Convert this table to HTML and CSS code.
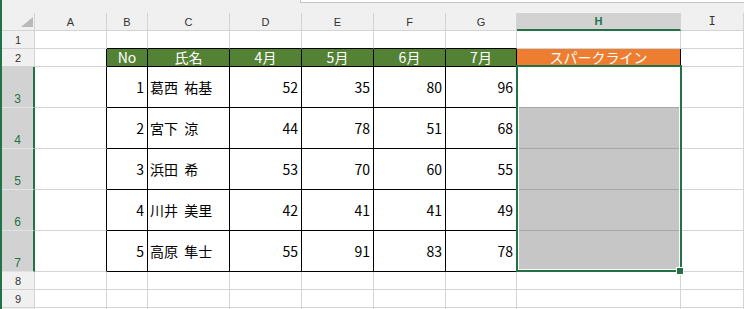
FILE: index.html
```html
<!DOCTYPE html>
<html lang="ja">
<head>
<meta charset="UTF-8">
<title>Book1 - Excel</title>
<link rel="stylesheet" href="styles.css">
</head>
<body>
<div class="screen">
    <div class="top-band"><div class="formula-box"></div></div>
    <div class="sheet">
        <!-- 列見出し -->
        <div class="corner">
            <svg width="12" height="10" viewBox="0 0 12 10"><polygon points="12,0 12,10 0,10" fill="#b9b9b9"/></svg>
        </div>
        <div class="col-head">A</div>
        <div class="col-head">B</div>
        <div class="col-head">C</div>
        <div class="col-head">D</div>
        <div class="col-head">E</div>
        <div class="col-head">F</div>
        <div class="col-head">G</div>
        <div class="col-head active">H</div>
        <div class="col-head serif">I</div>

        <!-- 1行目 -->
        <div class="row-head">1</div>
        <div class="cell"></div>
        <div class="cell line-b"></div>
        <div class="cell line-b"></div>
        <div class="cell line-b"></div>
        <div class="cell line-b"></div>
        <div class="cell line-b"></div>
        <div class="cell line-b"></div>
        <div class="cell"></div>
        <div class="cell"></div>

        <!-- 2行目 : 表の見出し -->
        <div class="row-head">2</div>
        <div class="cell line-r"></div>
        <div class="cell box head">No</div>
        <div class="cell box head">氏名</div>
        <div class="cell box head">4月</div>
        <div class="cell box head">5月</div>
        <div class="cell box head">6月</div>
        <div class="cell box head">7月</div>
        <div class="cell line-r spark">スパークライン</div>
        <div class="cell"></div>

        <!-- 3〜7行目 : データ -->
        <div class="row-head sel">3</div>
        <div class="cell line-r"></div>
        <div class="cell box num">1</div>
        <div class="cell box name">葛西 祐基</div>
        <div class="cell box num">52</div>
        <div class="cell box num">35</div>
        <div class="cell box num">80</div>
        <div class="cell box num">96</div>
        <div class="cell shade-b"></div>
        <div class="cell"></div>

        <div class="row-head sel">4</div>
        <div class="cell line-r"></div>
        <div class="cell box num">2</div>
        <div class="cell box name">宮下 涼</div>
        <div class="cell box num">44</div>
        <div class="cell box num">78</div>
        <div class="cell box num">51</div>
        <div class="cell box num">68</div>
        <div class="cell shade shade-b"></div>
        <div class="cell"></div>

        <div class="row-head sel">5</div>
        <div class="cell line-r"></div>
        <div class="cell box num">3</div>
        <div class="cell box name">浜田 希</div>
        <div class="cell box num">53</div>
        <div class="cell box num">70</div>
        <div class="cell box num">60</div>
        <div class="cell box num">55</div>
        <div class="cell shade shade-b"></div>
        <div class="cell"></div>

        <div class="row-head sel">6</div>
        <div class="cell line-r"></div>
        <div class="cell box num">4</div>
        <div class="cell box name">川井 美里</div>
        <div class="cell box num">42</div>
        <div class="cell box num">41</div>
        <div class="cell box num">41</div>
        <div class="cell box num">49</div>
        <div class="cell shade shade-b"></div>
        <div class="cell"></div>

        <div class="row-head sel">7</div>
        <div class="cell line-r"></div>
        <div class="cell box num">5</div>
        <div class="cell box name">高原 隼士</div>
        <div class="cell box num">55</div>
        <div class="cell box num">91</div>
        <div class="cell box num">83</div>
        <div class="cell box num">78</div>
        <div class="cell shade"></div>
        <div class="cell"></div>

        <!-- 8行目以降 -->
        <div class="row-head">8</div>
        <div class="cell"></div><div class="cell"></div><div class="cell"></div><div class="cell"></div>
        <div class="cell"></div><div class="cell"></div><div class="cell"></div><div class="cell"></div><div class="cell"></div>

        <div class="row-head">9</div>
        <div class="cell"></div><div class="cell"></div><div class="cell"></div><div class="cell"></div>
        <div class="cell"></div><div class="cell"></div><div class="cell"></div><div class="cell"></div><div class="cell"></div>

        <div class="row-head"></div>
        <div class="cell"></div><div class="cell"></div><div class="cell"></div><div class="cell"></div>
        <div class="cell"></div><div class="cell"></div><div class="cell"></div><div class="cell"></div><div class="cell"></div>
    </div>

    <!-- 選択範囲 H3:H7 とフィルハンドル -->
    <div class="selection"></div>
    <div class="fill-handle"></div>
</div>
</body>
</html>
```

FILE: styles.css
```css
*{
    box-sizing: border-box;
}
body{
    margin: 0;
    background: #fff;
}
.screen{
    position: relative;
    width: 744px;
    height: 309px;
    overflow: hidden;
    border-left: 2px solid #217346;
    background: #fff;
}
.top-band{
    height: 13px;
    background: #f0f0f0;
    padding-left: 298px;
}
.formula-box{
    height: 3px;
    background: #fff;
    border-left: 1px solid #c6c6c6;
    border-bottom: 1px solid #c6c6c6;
}
.sheet{
    display: grid;
    grid-template-columns: 33px 72px 41px 82px 72px 72px 72px 71px 164px 1fr;
    grid-template-rows: 18px 18px 18px repeat(5, 41px) 18px 18px 18px;
}
.sheet > div{
    border-right: 1px solid #d4d4d4;
    border-bottom: 1px solid #d4d4d4;
}

/* 見出し */
.corner{
    background: #f0f0f0;
    display: flex;
    align-items: flex-end;
    justify-content: flex-end;
    padding: 0 1px 3px 0;
}
.corner svg{
    display: block;
}
.col-head, .row-head{
    background: #f0f0f0;
    font-family: "Liberation Sans", "Noto Sans", sans-serif;
    font-size: 11px;
    color: #333;
    display: flex;
    align-items: center;
    justify-content: center;
}
.col-head.serif{
    font-family: "Liberation Mono", monospace;
    font-size: 12px;
}
.col-head.active{
    background: #d2d2d2;
    color: #217346;
    font-weight: bold;
    border-bottom: 2px solid #217346;
}
.row-head.sel{
    background: #d2d2d2;
    color: #217346;
    font-size: 12px;
    align-items: flex-end;
    padding-bottom: 1px;
    border-right: 2px solid #217346;
    border-bottom-color: #e2e2e2;
}

/* セル */
.cell{
    font-family: "Noto Sans CJK JP", sans-serif;
    font-size: 14px;
    line-height: 17px;
    color: #000;
    display: flex;
    align-items: center;
    white-space: nowrap;
}
.line-r{
    border-right-color: #000 !important;
}
.line-b{
    border-bottom-color: #000 !important;
}
.box{
    border-right-color: #000 !important;
    border-bottom-color: #000 !important;
}
.head{
    background: #548235;
    color: #fff;
    justify-content: center;
}
.spark{
    background: #ed7d31;
    color: #fff;
    justify-content: center;
}
.num{
    justify-content: flex-end;
    padding-right: 3px;
}
.name{
    padding-left: 2px;
    word-spacing: 3px;
}
.shade{
    background: #c6c6c6;
}
.shade-b{
    border-bottom-color: #a6a6a6 !important;
}

/* 選択枠 */
.selection{
    position: absolute;
    left: 514px;
    top: 65px;
    width: 166px;
    height: 207px;
    border: 2px solid #217346;
    box-shadow: inset 0 0 0 1px #fff;
}
.fill-handle{
    position: absolute;
    left: 675px;
    top: 268px;
    width: 6px;
    height: 6px;
    background: #217346;
    box-shadow: 0 0 0 1px #fff;
}
```
